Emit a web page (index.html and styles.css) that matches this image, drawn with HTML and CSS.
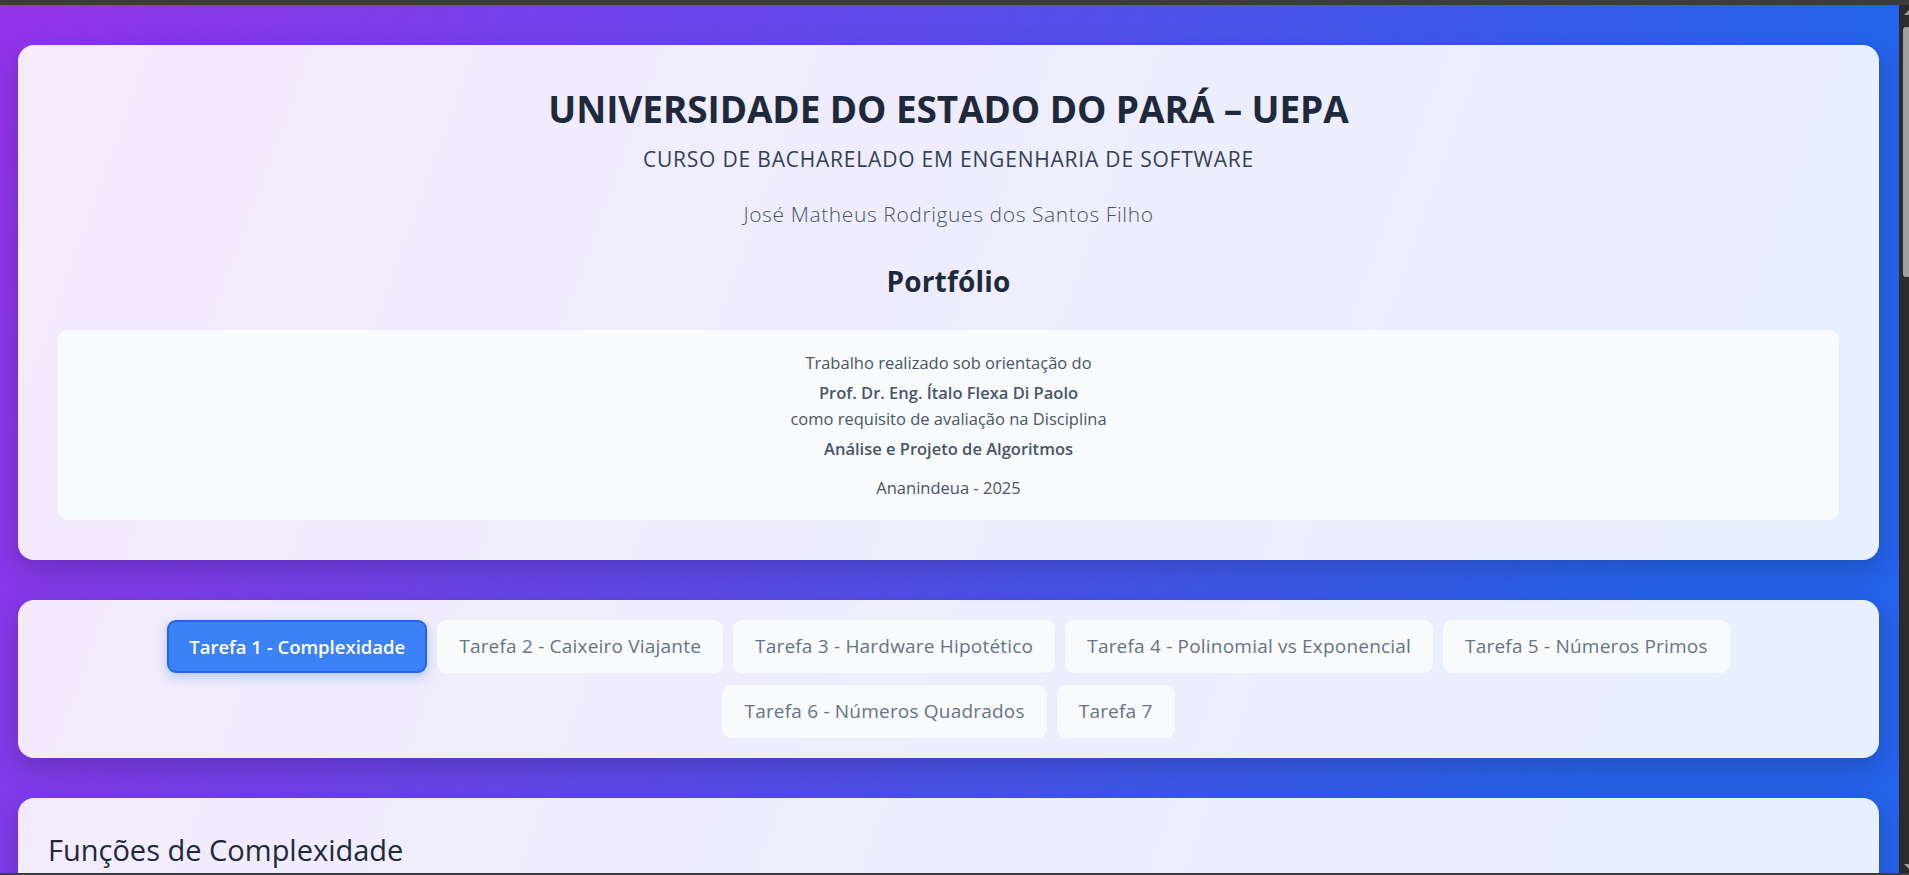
FILE: index.html
```html
<!DOCTYPE html>
<html lang="pt-BR">
<head>
<meta charset="utf-8">
<title>Portfólio - UEPA</title>
<link rel="stylesheet" href="styles.css">
</head>
<body>
<div class="frame">
  <div class="topbar"></div>
  <div class="window">
    <main class="page">
      <header class="card header-card">
        <h1 class="title">UNIVERSIDADE DO ESTADO DO PARÁ – UEPA</h1>
        <p class="course">CURSO DE BACHARELADO EM ENGENHARIA DE SOFTWARE</p>
        <p class="author">José Matheus Rodrigues dos Santos Filho</p>
        <h2 class="portfolio">Portfólio</h2>
        <div class="info-box">
          <p class="info-line">Trabalho realizado sob orientação do</p>
          <p class="info-line strong">Prof. Dr. Eng. Ítalo Flexa Di Paolo</p>
          <p class="info-line">como requisito de avaliação na Disciplina</p>
          <p class="info-line strong">Análise e Projeto de Algoritmos</p>
          <p class="info-line place">Ananindeua - 2025</p>
        </div>
      </header>

      <nav class="card nav-card">
        <div class="tabs">
          <button class="tab active">Tarefa 1 - Complexidade</button>
          <button class="tab">Tarefa 2 - Caixeiro Viajante</button>
          <button class="tab">Tarefa 3 - Hardware Hipotético</button>
          <button class="tab">Tarefa 4 - Polinomial vs Exponencial</button>
          <button class="tab">Tarefa 5 - Números Primos</button>
          <button class="tab">Tarefa 6 - Números Quadrados</button>
          <button class="tab">Tarefa 7</button>
        </div>
      </nav>

      <section class="card content-card">
        <h2 class="section-title">Funções de Complexidade</h2>
      </section>
    </main>
    <div class="scrollbar">
      <div class="arrow up"></div>
      <div class="track"><div class="thumb"></div></div>
      <div class="arrow down"></div>
    </div>
  </div>
  <div class="bottombar"></div>
</div>
</body>
</html>
```

FILE: styles.css
```css
* { box-sizing: border-box; }

html, body {
  margin: 0;
  padding: 0;
  height: 875px;
  overflow: hidden;
  background: #3c3c3c;
}

body {
  font-family: "Open Sans", "Noto Sans", "Liberation Sans", sans-serif;
  color: #1e293b;
}

.frame {
  display: flex;
  flex-direction: column;
  height: 875px;
}

.topbar {
  height: 5px;
  background: #3c3c3c;
  flex: none;
}

.bottombar {
  height: 2px;
  background: #3c3c3c;
  flex: none;
}

.window {
  flex: 1;
  display: flex;
  min-height: 0;
}

.page {
  flex: 1;
  overflow: hidden;
  padding: 40px 20px 0 18px;
  background: linear-gradient(110deg, #9333ea 0%, #2563eb 85%);
}

.scrollbar {
  width: 10px;
  flex: none;
  background: #2b2b2b;
  display: flex;
  flex-direction: column;
  align-items: flex-end;
}

.arrow {
  width: 6px;
  height: 14px;
  flex: none;
  display: flex;
  align-items: center;
  justify-content: flex-end;
}

.arrow.up::before {
  content: "";
  border-left: 5px solid transparent;
  border-bottom: 5px solid #9e9e9e;
}

.arrow.down::before {
  content: "";
  border-left: 5px solid transparent;
  border-top: 5px solid #9e9e9e;
}

.track {
  flex: 1;
  width: 6px;
  padding-top: 8px;
}

.thumb {
  width: 6px;
  height: 250px;
  background: #9f9f9f;
  border-radius: 3px 0 0 3px;
}

.card {
  background: rgba(255, 255, 255, 0.9);
  border-radius: 16px;
  box-shadow: 0 10px 30px rgba(0, 0, 0, 0.2);
  margin-bottom: 40px;
}

.header-card {
  padding: 40px;
  text-align: center;
}

.title {
  margin: 0 0 12px;
  font-size: 37px;
  line-height: 48px;
  font-weight: 700;
  color: #1e293b;
  letter-spacing: -0.1px;
}

.course {
  margin: 0 0 27px;
  font-size: 21px;
  line-height: 28px;
  font-weight: 500;
  letter-spacing: 0.8px;
  color: #334155;
}

.author {
  margin: 0 0 35px;
  font-size: 21px;
  line-height: 28px;
  font-weight: 300;
  letter-spacing: 0.6px;
  color: #475569;
}

.portfolio {
  margin: 0 0 31px;
  font-size: 28px;
  line-height: 36px;
  font-weight: 700;
  letter-spacing: 0.2px;
  color: #1e293b;
}

.info-box {
  background: #f8fafc;
  border-radius: 10px;
  padding: 21px 20px 20px;
}

.info-line {
  margin: 0;
  font-size: 16.5px;
  line-height: 24px;
  color: #475569;
}

.info-line.strong {
  font-weight: 600;
  margin: 6px 0 2px;
}

.info-line.place {
  margin-top: 15px;
}

.nav-card {
  padding: 20px;
}

.tabs {
  display: flex;
  flex-wrap: wrap;
  justify-content: center;
  column-gap: 10px;
  row-gap: 12px;
}

.tab {
  font-family: inherit;
  font-size: 19px;
  line-height: 25px;
  font-weight: 400;
  letter-spacing: 0.2px;
  padding: 12px 20px;
  border: 2px solid transparent;
  border-radius: 9px;
  background: #f8fafc;
  color: #64748b;
  cursor: pointer;
}

.tab.active {
  font-size: 18.5px;
  letter-spacing: 0;
  background: #3b82f6;
  border-color: #2563eb;
  color: #ffffff;
  font-weight: 600;
  box-shadow: 0 4px 12px rgba(59, 130, 246, 0.35);
}

.content-card {
  padding: 34px 30px 30px;
  min-height: 200px;
}

.section-title {
  margin: 0;
  font-size: 29px;
  line-height: 36px;
  font-weight: 500;
  color: #1e293b;
}
```
